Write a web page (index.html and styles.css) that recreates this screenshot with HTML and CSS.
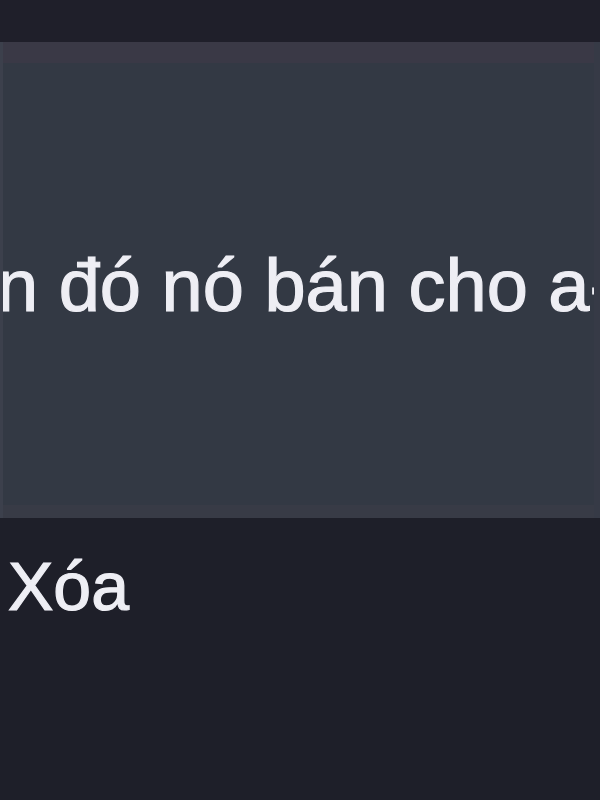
FILE: index.html
```html
<!DOCTYPE html>
<html lang="vi">
<head>
  <meta charset="UTF-8">
  <title>Tin nhắn</title>
  <link rel="stylesheet" href="styles.css">
</head>
<body>
  <div class="top-bar"></div>

  <div class="message">
    <div class="message-head"></div>
    <div class="message-body">
      <p class="message-text">n đó nó bán cho a-</p>
    </div>
    <div class="message-foot"></div>
  </div>

  <div class="actions">
    <span class="action-delete">Xóa</span>
  </div>
</body>
</html>
```

FILE: styles.css
```css
body {
  margin: 0;
  background: #1e1f29;
  color: #eeeef4;
  font-family: "Liberation Sans", Arial, sans-serif;
  overflow: hidden;
}

.top-bar {
  height: 42px;
  background: #1f1f2a;
}

.message {
  background: #333944;
  border-left: 3px solid #3c404c;
  border-right: 6px solid #363a46;
  overflow: hidden;
}

.message-head {
  height: 21px;
  background: #3a3946;
}

.message-body {
  height: 442px;
  padding-top: 186px;
  box-sizing: border-box;
}

.message-text {
  margin: 0 0 0 -6px;
  font-size: 74px;
  line-height: 74px;
  white-space: nowrap;
  -webkit-text-stroke: 1.2px #eeeef4;
}

.message-foot {
  height: 13px;
  background: #383b46;
}

.actions {
  padding: 34px 0 0 8px;
}

.action-delete {
  display: block;
  font-size: 68px;
  line-height: 68px;
  -webkit-text-stroke: 1.2px #eeeef4;
}
```
